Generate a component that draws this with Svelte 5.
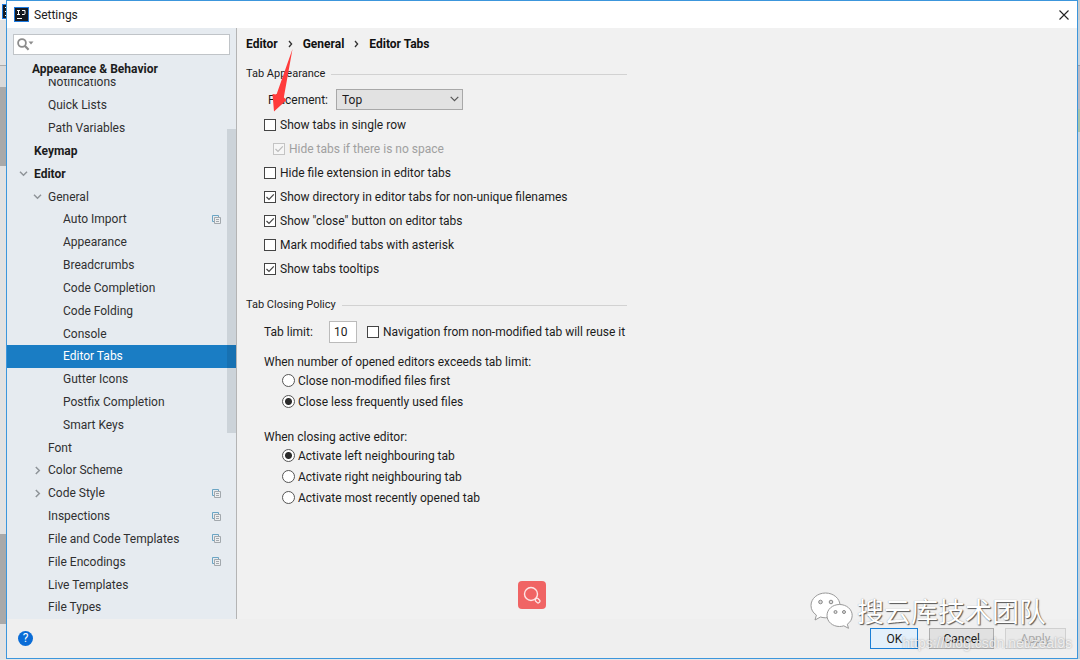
<script>
  const rows = [
    { text: 'Notifications', level: 2 },
    { text: 'Quick Lists', level: 2 },
    { text: 'Path Variables', level: 2 },
    { text: 'Keymap', level: 1 },
    { text: 'Editor', level: 1, arrow: 'open' },
    { text: 'General', level: 2, arrow: 'open' },
    { text: 'Auto Import', level: 3, project: true },
    { text: 'Appearance', level: 3 },
    { text: 'Breadcrumbs', level: 3 },
    { text: 'Code Completion', level: 3 },
    { text: 'Code Folding', level: 3 },
    { text: 'Console', level: 3 },
    { text: 'Editor Tabs', level: 3, selected: true },
    { text: 'Gutter Icons', level: 3 },
    { text: 'Postfix Completion', level: 3 },
    { text: 'Smart Keys', level: 3 },
    { text: 'Font', level: 2 },
    { text: 'Color Scheme', level: 2, arrow: 'closed' },
    { text: 'Code Style', level: 2, arrow: 'closed', project: true },
    { text: 'Inspections', level: 2, project: true },
    { text: 'File and Code Templates', level: 2, project: true },
    { text: 'File Encodings', level: 2, project: true },
    { text: 'Live Templates', level: 2 },
    { text: 'File Types', level: 2 }
  ];
  const checks = $state([
    { text: 'Show tabs in single row', on: false },
    { text: 'Hide tabs if there is no space', on: true, disabled: true },
    { text: 'Hide file extension in editor tabs', on: false },
    { text: 'Show directory in editor tabs for non-unique filenames', on: true },
    { text: 'Show "close" button on editor tabs', on: true },
    { text: 'Mark modified tabs with asterisk', on: false },
    { text: 'Show tabs tooltips', on: true }
  ]);
  const exceed = ['Close non-modified files first', 'Close less frequently used files'];
  const closing = [
    'Activate left neighbouring tab',
    'Activate right neighbouring tab',
    'Activate most recently opened tab'
  ];
  let exceedChoice = $state(exceed[1]);
  let closingChoice = $state(closing[0]);
  let reuse = $state(false);
  let limit = $state('10');
  let query = $state('');
</script>

{#snippet logo()}
  <svg class="logo" viewBox="0 0 15 15" aria-hidden="true">
    <rect width="15" height="15" fill="#1f7be0" />
    <rect x="1" y="1" width="13" height="13" fill="#151a22" />
    <path d="M3 3.5h3M4.5 3.5v4M3 7.5h3M8 3.5h3v3q0 1-1 1H8" fill="none" stroke="#fff" />
    <path d="M3 11.5h5" stroke="#fff" />
  </svg>
{/snippet}

<div class="desktop">
  <div class="behind left">{@render logo()}</div>
  <div class="window">
    <header class="titlebar">
      {@render logo()}
      <span class="title">Settings</span>
      <button class="close" aria-label="Close">
        <svg viewBox="0 0 10 10"><path d="M.5.5l9 9M9.5.5l-9 9" stroke="#222" stroke-width="1.1" /></svg>
      </button>
    </header>

    <div class="body">
      <aside>
        <div class="search">
          <svg viewBox="0 0 18 13" aria-hidden="true">
            <circle cx="5" cy="5" r="3.9" fill="none" stroke="#8c8c8c" stroke-width="1.8" />
            <path d="M8 8l3.6 3.8" stroke="#8c8c8c" stroke-width="2.2" />
            <path d="M11.5 3.5h5l-2.5 3z" fill="#8c8c8c" />
          </svg>
          <input type="text" aria-label="Search settings" bind:value={query} />
        </div>
        <div class="pinned">Appearance &amp; Behavior</div>
        <nav class="tree" aria-label="Settings pages">
          {#each rows as row}
            <a href="#page" class="row level{row.level}" class:selected={row.selected}>
              {#if row.arrow}
                <svg class="chevron {row.arrow}" viewBox="0 0 9 9" aria-hidden="true">
                  <path d="M1 2.8l3.5 3.5L8 2.8" fill="none" stroke="#8f9499" stroke-width="1.5" />
                </svg>
              {/if}
              <span>{row.text}</span>
              {#if row.project}
                <svg class="project" viewBox="0 0 9 9" aria-hidden="true">
                  <path d="M2 6.5H.5v-6h6V2" fill="none" stroke="#6ba5c4" />
                  <path d="M2.5 2.5h6v6h-6zM4 4.5h3M4 6.5h3" fill="#eceef0" stroke="#a2a8ad" />
                </svg>
              {/if}
            </a>
          {/each}
          <div class="thumb"></div>
        </nav>
      </aside>

      <main>
        <div class="crumbs">
          <span>Editor</span>
          <svg viewBox="0 0 5 8" aria-hidden="true"><path d="M1 1l2.600 3L1 7" fill="none" stroke="#333" stroke-width="1.300" /></svg>
          <span>General</span>
          <svg viewBox="0 0 5 8" aria-hidden="true"><path d="M1 1l2.600 3L1 7" fill="none" stroke="#333" stroke-width="1.300" /></svg>
          <span>Editor Tabs</span>
        </div>

        <section>
          <h2>Tab Appearance</h2>
          <div class="placement">
            <label for="placement">Placement:</label>
            <div class="select">
              <select id="placement">
                <option>Top</option>
                <option>Bottom</option>
                <option>Left</option>
                <option>Right</option>
                <option>None</option>
              </select>
              <svg viewBox="0 0 9 6" aria-hidden="true">
                <path d="M.7.8l3.8 3.8L8.3.8" fill="none" stroke="#555" stroke-width="1.2" />
              </svg>
            </div>
          </div>
          <div class="checks">
            {#each checks as c}
              <label class="check" class:nested={c.disabled}>
                <input type="checkbox" bind:checked={c.on} disabled={c.disabled} />{c.text}
              </label>
            {/each}
          </div>
        </section>

        <section class="closing">
          <h2>Tab Closing Policy</h2>
          <div class="limit">
            <label class="caption" for="limit">Tab limit:</label>
            <input id="limit" type="text" bind:value={limit} />
            <label class="check"><input type="checkbox" bind:checked={reuse} />Navigation from non-modified tab will reuse it</label>
          </div>
          <fieldset>
            <legend>When number of opened editors exceeds tab limit:</legend>
            {#each exceed as text}
              <label class="radio"><input type="radio" name="exceed" value={text} bind:group={exceedChoice} />{text}</label>
            {/each}
          </fieldset>
          <fieldset>
            <legend>When closing active editor:</legend>
            {#each closing as text}
              <label class="radio"><input type="radio" name="closing" value={text} bind:group={closingChoice} />{text}</label>
            {/each}
          </fieldset>
        </section>
      </main>
    </div>

    <footer>
      <button class="help" aria-label="Help">?</button>
      <div class="actions">
        <button class="primary">OK</button>
        <button>Cancel</button>
        <button disabled>Apply</button>
      </div>
    </footer>
  </div>
  <div class="behind right"></div>

  <svg class="pointer" viewBox="0 0 24 66" aria-hidden="true">
    <path d="M21.5 1L12.8 49.500L15.500 52L3 63.500L1.500 46L5.500 46.500Z" fill="#ff3b3b" />
  </svg>

  <button class="lens" aria-label="Search image">
    <svg viewBox="0 0 28 28">
      <circle cx="13" cy="13" r="6.500" fill="none" stroke="#fde6e6" stroke-width="1.400" />
      <rect x="-1.700" y="-2.400" width="3.400" height="4.800" rx="1.200" transform="translate(19.600 19.600) rotate(-45)" fill="none" stroke="#fde6e6" stroke-width="1.300" />
    </svg>
  </button>

  <div class="brand">
    <svg viewBox="0 0 44 38" aria-hidden="true">
      <g fill="#fff" stroke="#999" stroke-width="1">
        <path d="M15.500 1C7.500 1 1 6.500 1 13.500c0 4 2 7.300 5.400 9.600L5 28l5.500-3c1.600.5 3.300.8 5 .8C23.500 25.800 30 20.500 30 13.500S23.500 1 15.500 1z" />
        <path d="M29.500 12.500C22.500 12.500 17 17.300 17 23.500S22.500 34.500 29.500 34.500c1.500 0 3-.2 4.300-.7L38.500 36.300 37.300 32.200C40.300 30.200 42.200 27 42.200 23.500c0-6.200-5.700-11-12.700-11z" />
      </g>
      <g fill="#ddd" stroke="#888">
        <circle cx="10.500" cy="10" r="1.800" /><circle cx="21" cy="10" r="1.800" />
        <circle cx="25.500" cy="20" r="1.500" /><circle cx="34" cy="20" r="1.500" />
      </g>
    </svg>
    <span>搜云库技术团队</span>
  </div>
  <div class="source">https://blog.csdn.net/zeal9s</div>
</div>

<style>
  :global(body) {
    margin: 0;
    background: #e6e6e6;
  }
  .desktop {
    position: relative;
    display: grid;
    grid-template-columns: 6px 1fr 2px;
    height: 100vh;
    padding-bottom: 1px;
    box-sizing: border-box;
    overflow: hidden;
    font: 12px/16px Roboto, 'Noto Sans CJK SC', sans-serif;
    color: #1c1c1c;
  }
  button,
  input,
  select {
    font: inherit;
    color: inherit;
    box-sizing: border-box;
    margin: 0;
  }
  .behind {
    overflow: hidden;
  }
  .left {
    padding: 4px 0 0 2px;
    background: linear-gradient(#f6f6f6 20px, #e2e2e2 20px 65px, #aaa 65px 66px, #d9d9d9 66px 87px, #a9a9a9 87px 166px, #e2e2e2 166px 534px, #a9a9a9 534px 624px, #e2e2e2 624px);
  }
  .right {
    background: linear-gradient(#ccc 20px, #c9d3dc 20px 65px, #9a9fa5 65px 66px, #bbb8c2 66px 109px, #a9c3a8 109px 132px, #c9d3dc 132px);
  }
  .logo {
    display: block;
    width: 15px;
    height: 15px;
  }
  .window {
    display: flex;
    flex-direction: column;
    min-width: 0;
    border: 1px solid #3c96dc;
    background: #f1f1f1;
  }
  .titlebar {
    display: flex;
    align-items: center;
    gap: 5px;
    height: 27px;
    padding: 0 8px 0 7px;
    background: #fff;
  }
  .title {
    flex: 1;
  }
  .close {
    display: grid;
    border: 0;
    padding: 0;
    background: none;
  }
  .close svg {
    width: 10px;
    height: 10px;
  }
  .body {
    flex: 1;
    display: flex;
    min-height: 0;
  }
  aside {
    flex: none;
    display: flex;
    flex-direction: column;
    width: 229px;
    background: #e6ebf0;
    border-right: 1px solid #b4b4b4;
  }
  .search {
    display: flex;
    align-items: center;
    gap: 4px;
    margin: 6px 6px 4px;
    padding-left: 3px;
    height: 19px;
    border: 1px solid #c0c4c8;
    background: #fff;
  }
  .search svg {
    width: 18px;
    height: 13px;
  }
  .search input {
    flex: 1;
    min-width: 0;
    height: 17px;
    border: 0;
    outline: 0;
    padding: 0;
    background: none;
  }
  .pinned {
    position: relative;
    z-index: 1;
    height: 20px;
    padding-left: 25px;
    line-height: 20px;
    font-weight: 700;
    background: #e6ebf0;
  }
  .tree {
    position: relative;
    flex: 1;
    display: flex;
    flex-direction: column;
    margin-top: -8px;
  }
  .row {
    flex: 1;
    display: flex;
    align-items: center;
    padding-right: 15px;
    color: #303030;
    text-decoration: none;
  }
  .row span {
    flex: 1;
  }
  .level1 {
    padding-left: 27px;
    font-weight: 700;
    color: #1c1c1c;
  }
  .level2 {
    padding-left: 41px;
  }
  .level3 {
    padding-left: 56px;
  }
  .selected {
    background: #1a7dc4;
    color: #fff;
  }
  .chevron {
    width: 9px;
    height: 9px;
    margin: 0 6px 0 -15px;
  }
  .closed {
    transform: rotate(-90deg);
  }
  .project {
    width: 9px;
    height: 9px;
  }
  .thumb {
    position: absolute;
    right: 0;
    top: 58px;
    width: 9px;
    height: 304px;
    background: rgba(0, 20, 40, 0.11);
  }
  main {
    flex: 1;
    min-width: 0;
    padding: 8px 9px;
  }
  .crumbs {
    display: flex;
    align-items: center;
    gap: 10px;
    font-weight: 700;
    color: #111;
  }
  .crumbs svg {
    width: 5px;
    height: 8px;
  }
  section {
    max-width: 381px;
    padding-top: 14px;
  }
  h2 {
    display: flex;
    align-items: center;
    gap: 6px;
    margin: 0;
    font-size: 11px;
    font-weight: 400;
    line-height: 16px;
  }
  h2::after {
    content: '';
    flex: 1;
    height: 1px;
    background: #d2d2d2;
  }
  .placement {
    display: flex;
    align-items: center;
    gap: 8px;
    margin: 7px 0 3px 22px;
  }
  .placement label {
    min-width: 59px;
  }
  .select {
    position: relative;
    width: 127px;
  }
  .select select {
    display: block;
    width: 100%;
    height: 21px;
    padding: 0 5px;
    appearance: none;
    border: 1px solid #a8a8a8;
    border-radius: 0;
    background: #e2e2e2;
  }
  .select svg {
    position: absolute;
    right: 4px;
    top: 7px;
    width: 9px;
    height: 6px;
    pointer-events: none;
  }
  .checks {
    padding-left: 18px;
  }
  .check,
  .radio {
    display: flex;
    align-items: center;
    gap: 4px;
    white-space: nowrap;
  }
  .checks .check {
    height: 24px;
  }
  .nested {
    margin-left: 9px;
    color: #a0a0a0;
  }
  .check input {
    appearance: none;
    width: 12px;
    height: 12px;
    border: 1px solid #444;
    background: #fff;
  }
  .check input:checked {
    background: url("data:image/svg+xml,%3Csvg xmlns='http://www.w3.org/2000/svg' viewBox='0 0 10 10'%3E%3Cpath d='M1.500 5l2.500 2.500L8.800 2.300' fill='none' stroke='%23444' stroke-width='1.200'/%3E%3C/svg%3E") #fff;
  }
  .check input:disabled {
    border-color: #c4c4c4;
    background: url("data:image/svg+xml,%3Csvg xmlns='http://www.w3.org/2000/svg' viewBox='0 0 10 10'%3E%3Cpath d='M1.500 5l2.500 2.500L8.800 2.300' fill='none' stroke='%23bbb' stroke-width='1.200'/%3E%3C/svg%3E") #f6f6f6;
  }
  .closing {
    padding-top: 16px;
  }
  .limit {
    display: flex;
    align-items: center;
    margin: 8px 0 0 18px;
  }
  .caption {
    flex: none;
    width: 65px;
  }
  .limit > input {
    flex: none;
    width: 28px;
    height: 22px;
    margin-right: 10px;
    padding: 0 4px;
    border: 1px solid #bbb;
    background: #fff;
  }
  fieldset {
    margin: 11px 0 17px 18px;
    padding: 0 0 0 18px;
    border: 0;
  }
  legend {
    margin-left: -18px;
    padding: 0;
  }
  .radio {
    height: 21px;
    gap: 3px;
  }
  .radio input {
    appearance: none;
    width: 13px;
    height: 13px;
    border: 1px solid #555;
    border-radius: 50%;
    background: #fff;
  }
  .radio input:checked {
    background: radial-gradient(circle, #2b2b2b 3px, #fff 4px);
  }
  footer {
    display: flex;
    align-items: center;
    justify-content: space-between;
    height: 39px;
    padding: 0 11px;
    background: #efefef;
  }
  .help {
    width: 15px;
    height: 15px;
    padding: 0;
    border: 0;
    border-radius: 50%;
    background: #0a6cd6;
    color: #fff;
    line-height: 15px;
  }
  .actions {
    display: flex;
    gap: 11px;
  }
  .actions button {
    min-width: 61px;
    height: 21px;
    padding: 0 13px;
    border: 1px solid #adadad;
    background: #e1e1e1;
    line-height: 16px;
  }
  .actions .primary {
    min-width: 48px;
    border-color: #1a7fd6;
    background: #e3f0fb;
  }
  .actions button:disabled {
    border-color: #d0d0d0;
    background: #e9e9e9;
    color: #aaa;
  }
  .pointer {
    position: absolute;
    left: 271px;
    top: 48px;
    width: 24px;
    height: 66px;
  }
  .lens {
    position: absolute;
    left: 518px;
    top: 581px;
    width: 28px;
    height: 28px;
    padding: 0;
    border: 0;
    border-radius: 4px;
    background: #f06464;
  }
  .lens svg {
    display: block;
  }
  .brand {
    position: absolute;
    right: 34px;
    bottom: 30px;
    display: flex;
    align-items: center;
    gap: 3px;
    pointer-events: none;
  }
  .brand svg {
    width: 44px;
    height: 38px;
  }
  .brand span {
    font: 27px/38px 'Noto Sans CJK SC', sans-serif;
    color: #fff;
    text-shadow: 1px 1px 1px #555, 0 0 1px #999;
  }
  .source {
    position: absolute;
    right: 8px;
    bottom: 9px;
    font: 14px/16px 'Liberation Sans', sans-serif;
    color: rgba(255, 255, 255, 0.75);
    text-shadow: 0 0 2px rgba(0, 0, 0, 0.35);
    pointer-events: none;
  }
</style>
